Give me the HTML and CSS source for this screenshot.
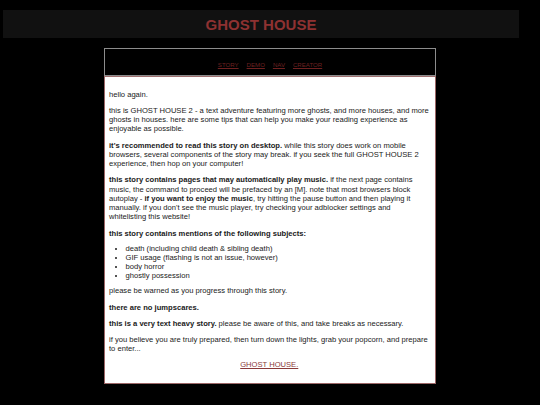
FILE: index.html
```html
<!DOCTYPE html>
<html>
<head>
<meta charset="utf-8">
<link rel="stylesheet" href="styles.css">
</head>
<body>
<header class="top">
  <h1 class="title">GHOST HOUSE</h1>
</header>
<div class="wrap">
  <nav class="nav">
    <a href="#">STORY</a>
    <a href="#">DEMO</a>
    <a href="#">NAV</a>
    <a href="#">CREATOR</a>
  </nav>
  <main class="content">
    <p>hello again.</p>
    <p>this is GHOST HOUSE 2 - a text adventure featuring more ghosts, and more houses, and more ghosts in houses. here are some tips that can help you make your reading experience as enjoyable as possible.</p>
    <p><b>it's recommended to read this story on desktop.</b> while this story does work on mobile browsers, several components of the story may break. if you seek the full GHOST HOUSE 2 experience, then hop on your computer!</p>
    <p><b>this story contains pages that may automatically play music.</b> if the next page contains music, the command to proceed will be prefaced by an [M]. note that most browsers block autoplay - <b>if you want to enjoy the music</b>, try hitting the pause button and then playing it manually. if you don't see the music player, try checking your adblocker settings and whitelisting this website!</p>
    <p class="before-list"><b>this story contains mentions of the following subjects:</b></p>
    <ul class="list">
      <li>death (including child death &amp; sibling death)</li>
      <li>GIF usage (flashing is not an issue, however)</li>
      <li>body horror</li>
      <li>ghostly possession</li>
    </ul>
    <p class="after-list">please be warned as you progress through this story.</p>
    <p><b>there are no jumpscares.</b></p>
    <p><b>this is a very text heavy story.</b> please be aware of this, and take breaks as necessary.</p>
    <p>if you believe you are truly prepared, then turn down the lights, grab your popcorn, and prepare to enter...</p>
    <p class="enter"><a href="#">GHOST HOUSE.</a></p>
  </main>
</div>
</body>
</html>
```
FILE: styles.css
```css
html, body {
  margin: 0;
  padding: 0;
  background: #000;
}
body {
  font-family: "Liberation Sans", Arial, sans-serif;
  height: 405px;
  overflow: hidden;
}
.top {
  margin: 10px 21px 0 3px;
  height: 28px;
  background: #111;
  display: flex;
  align-items: center;
  justify-content: center;
}
.title {
  margin: 0;
  font-size: 15px;
  font-weight: bold;
  color: #8e3131;
  line-height: 1;
}
.wrap {
  width: 332px;
  margin: 10px auto 0;
}
.nav {
  box-sizing: border-box;
  height: 28px;
  border: 1px solid #8c8c8c;
  background: #000;
  display: flex;
  justify-content: center;
  align-items: flex-start;
  gap: 8px;
  padding-top: 12px;
  font-size: 6.1px;
  line-height: 7px;
}
.nav a {
  color: #6e2020;
  text-decoration: underline;
}
.content {
  display: block;
  border: 1px solid #9c6767;
  border-top-color: #a07070;
  background: #fff;
  padding: 5.8px 5.5px 6.5px 4px;
  font-size: 7.6px;
  line-height: 9.3px;
  color: #1a1a1a;
}
.content p {
  margin: 6.85px 0;
}
.content p.before-list {
  margin-bottom: 0;
}
.content p.after-list {
  margin-top: 0;
}
.list {
  margin: 5.7px 0;
  padding-left: 16.5px;
}
.enter {
  text-align: center;
}
.enter a {
  color: #8a3a3a;
  text-decoration: underline;
}
```
